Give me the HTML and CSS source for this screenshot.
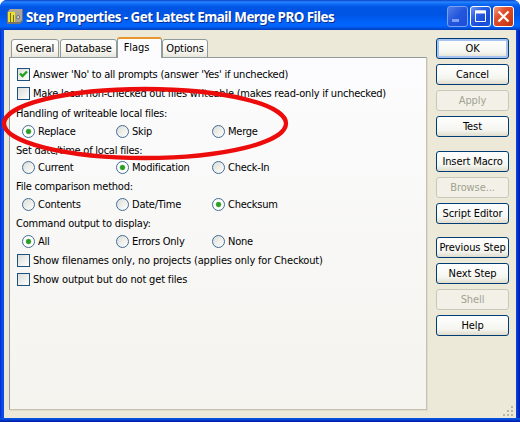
FILE: index.html
```html
<!DOCTYPE html>
<html lang="en">
<head>
<meta charset="utf-8">
<title>Step Properties</title>
<link rel="stylesheet" href="styles.css">
</head>
<body>
<div class="window">
  <header class="titlebar">
    <svg class="app-icon" width="16" height="16" viewBox="0 0 16 16">
      <path d="M3 1h13v12l-3 3H0V4z" fill="#77736a"/>
      <path d="M3 1h12v11l-2 2V4H1z" fill="#aaa69b"/>
      <path d="M1 4h7v10H1z" fill="#eee028"/>
      <path d="M3 5h1v9H3zM6 7h1v7H6z" fill="#716c16"/>
      <path d="M8 4h5v10H8z" fill="#a5a39d"/>
      <path d="M9 10l2-3 2 2-2 2z" fill="#ccc" stroke="#666" stroke-width=".8"/>
    </svg>
    <h1>Step Properties - Get Latest Email Merge PRO Files</h1>
    <div class="controls">
      <span class="ctl min"><svg width="19" height="19"><path d="M4 13.5h7" stroke="#7ba0f5" stroke-width="3"/></svg></span>
      <span class="ctl"><svg width="19" height="19"><path d="M4.5 4h10v10.5h-10z" fill="none" stroke="#fff"/><path d="M4 5h11" stroke="#fff" stroke-width="3"/></svg></span>
      <span class="ctl close"><svg width="19" height="19"><path d="M4.5 4.5l10 10M14.5 4.5l-10 10" stroke="#fff" stroke-width="2.2"/></svg></span>
    </div>
  </header>
  <main class="client">
    <section class="pages">
      <nav class="tabs">
        <span class="tab general">General</span>
        <span class="tab database">Database</span>
        <span class="tab active">Flags</span>
        <span class="tab options">Options</span>
      </nav>
      <div class="panel">
        <div class="check"><i class="box on"><svg width="11" height="11"><path d="M2 4.5L4.5 7 9 2.5" fill="none" stroke="#21a121" stroke-width="2.4"/></svg></i><span>Answer 'No' to all prompts (answer 'Yes' if unchecked)</span></div>
        <div class="check second"><i class="box"></i><span>Make local non-checked out files writeable (makes read-only if unchecked)</span></div>
        <div class="group"><p>Handling of writeable local files:</p>
          <div class="radios"><span><i class="dot on"></i>Replace</span><span><i class="dot"></i>Skip</span><span><i class="dot"></i>Merge</span></div></div>
        <div class="group"><p>Set date/time of local files:</p>
          <div class="radios near"><span><i class="dot"></i>Current</span><span><i class="dot on"></i>Modification</span><span><i class="dot"></i>Check-In</span></div></div>
        <div class="group"><p>File comparison method:</p>
          <div class="radios"><span><i class="dot"></i>Contents</span><span><i class="dot"></i>Date/Time</span><span><i class="dot on"></i>Checksum</span></div></div>
        <div class="group"><p>Command output to display:</p>
          <div class="radios"><span><i class="dot on"></i>All</span><span><i class="dot"></i>Errors Only</span><span><i class="dot"></i>None</span></div></div>
        <div class="check"><i class="box"></i><span class="wide">Show filenames only, no projects (applies only for Checkout)</span></div>
        <div class="check"><i class="box"></i><span class="wide">Show output but do not get files</span></div>
      </div>
    </section>
    <aside class="actions">
      <button class="default">OK</button>
      <button>Cancel</button>
      <button disabled>Apply</button>
      <button>Test</button>
      <button class="apart">Insert Macro</button>
      <button disabled>Browse...</button>
      <button>Script Editor</button>
      <button class="apart less">Previous Step</button>
      <button>Next Step</button>
      <button disabled>Shell</button>
      <button>Help</button>
    </aside>
  </main>
  <svg class="grip" width="12" height="12"><path d="M8 1h2v2H8zM4 5h2v2H4zM8 5h2v2H8zM0 9h2v2H0zM4 9h2v2H4zM8 9h2v2H8z" fill="#b8b4a0"/></svg>
  <svg class="marker" width="290" height="76"><ellipse cx="145" cy="38.5" rx="141" ry="34.5" fill="none" stroke="#ed0c0c" stroke-width="4.3"/></svg>
</div>
</body>
</html>
```
FILE: styles.css
```css
* { box-sizing: border-box; }
body { margin: 0; background: #fff; overflow: hidden; font: 11px/15px "DejaVu Sans Condensed", "DejaVu Sans", sans-serif; color: #000; }
h1, p { margin: 0; }
i { flex: none; }
svg { display: block; }
.window {
  position: relative; width: 520px; height: 422px; padding: 0 4px 4px;
  display: flex; flex-direction: column; overflow: hidden;
  border-radius: 7px 7px 0 0;
  background: linear-gradient(90deg, #0831d9 0 1px, #0855e8 2px, #0a46e6 4px, #0a46e6 516px, #0639da 517px, #0019a8 520px);
}
.window::after { content: ""; position: absolute; left: 0; right: 0; bottom: 0; height: 4px; background: linear-gradient(#0855dd 0 1px, #0039d5 2px, #001b9b); }
.titlebar {
  height: 30px; flex: none; margin: 0 -4px; padding: 2px 6px 0 7px;
  display: flex; align-items: center;
  background: linear-gradient(#0841c5, #2985ff 2px, #0c6cf5 4px, #0055e5 7px, #0054e3 15px, #0060f8 21px, #0267ff 26px, #0048d0 29px, #003dbc);
}
h1 { margin: 2px 0 0 3px; flex: 1; color: #fff; font: bold 13.4px/18px "Noto Sans", sans-serif; letter-spacing: -.51px; white-space: nowrap; text-shadow: 1px 1px 0 #0a2f8c; }
.controls { display: flex; gap: 2px; }
.ctl { width: 21px; height: 21px; border: 1px solid #fff; border-radius: 3px; background: linear-gradient(135deg, #7298f2, #2a5fe5 35%, #174bd5 75%, #1c5de8); }
.ctl.min { border-color: #7d9ff0; background: linear-gradient(135deg, #527de8, #2355dc 50%, #1b4fd8); }
.ctl.close { background: linear-gradient(135deg, #f0a080, #e2512e 35%, #d03f18 75%, #b83510); }
.client { flex: 1; display: flex; justify-content: space-between; padding: 7px 7px 8px 5px; background: #ece9d8; }
.pages { width: 418px; display: flex; flex-direction: column; }
.tabs { height: 21px; flex: none; display: flex; align-items: flex-end; padding-left: 2px; position: relative; margin-bottom: -1px; }
.tab { height: 19px; border: 1px solid #919b9c; border-radius: 3px 3px 0 0; background: linear-gradient(#fff, #f5f4ee 70%, #e7e5db); text-align: center; line-height: 18px; letter-spacing: -.1px; }
.general { width: 48px; margin-right: 1px; }
.database { width: 57px; }
.options { width: 46px; }
.tab.active { width: 45px; height: 21px; padding-right: 6px; border-top: 2px solid #e5972d; border-bottom: 0; background: #fcfcfe; line-height: 17px; }
.panel { flex: 1; padding: 9px 0 0 7px; border: 1px solid #919b9c; border-right-color: #c5c2b2; border-bottom-color: #c5c2b2; background: linear-gradient(#fcfcfe, #f4f3ee); box-shadow: 1px 1px #dedbc9; white-space: nowrap; letter-spacing: -.23px; }
.check { display: flex; align-items: center; height: 15px; margin-bottom: 4px; gap: 3px; }
.check.second { margin-bottom: 5px; }
.box { width: 13px; height: 13px; border: 1px solid #1c5180; background: linear-gradient(135deg, #dcdcd7, #fff); }
.wide { letter-spacing: -.17px; }
.group { margin-bottom: 4px; }
.group p { height: 16px; margin-left: -1px; line-height: 16px; }
.radios { display: grid; grid-template-columns: 94px 96px 1fr; padding-left: 5px; height: 15px; margin-top: 2px; }
.radios.near { margin-top: 1px; }
.radios span { display: flex; align-items: center; gap: 3px; }
.dot { width: 13px; height: 13px; border: 1px solid #426c94; border-radius: 50%; background: linear-gradient(135deg, #dcdcd7, #fff); }
.dot.on { background: radial-gradient(circle, #2d9d28 0 1.9px, #55b94c 2.4px, #fff 3.2px); }
.actions { width: 73px; margin-top: 1px; display: flex; flex-direction: column; gap: 5px; }
button { width: 73px; height: 21px; padding: 0; flex: none; border: 1px solid #003c74; border-radius: 3px; background: linear-gradient(#fff, #f5f5f0 70%, #dfdccd); color: #000; font: inherit; line-height: 19px; letter-spacing: -.1px; white-space: nowrap; }
button.default { box-shadow: inset 0 0 0 2px #a5c2f2; }
button:disabled { color: #a1a192; background: #f3f1e7; border-color: #c9c7ba; }
button.apart { margin-top: 9px; }
button.less { margin-top: 8px; }
.grip { position: absolute; right: 5px; bottom: 5px; }
.marker { position: absolute; left: 0; top: 85px; }
```
